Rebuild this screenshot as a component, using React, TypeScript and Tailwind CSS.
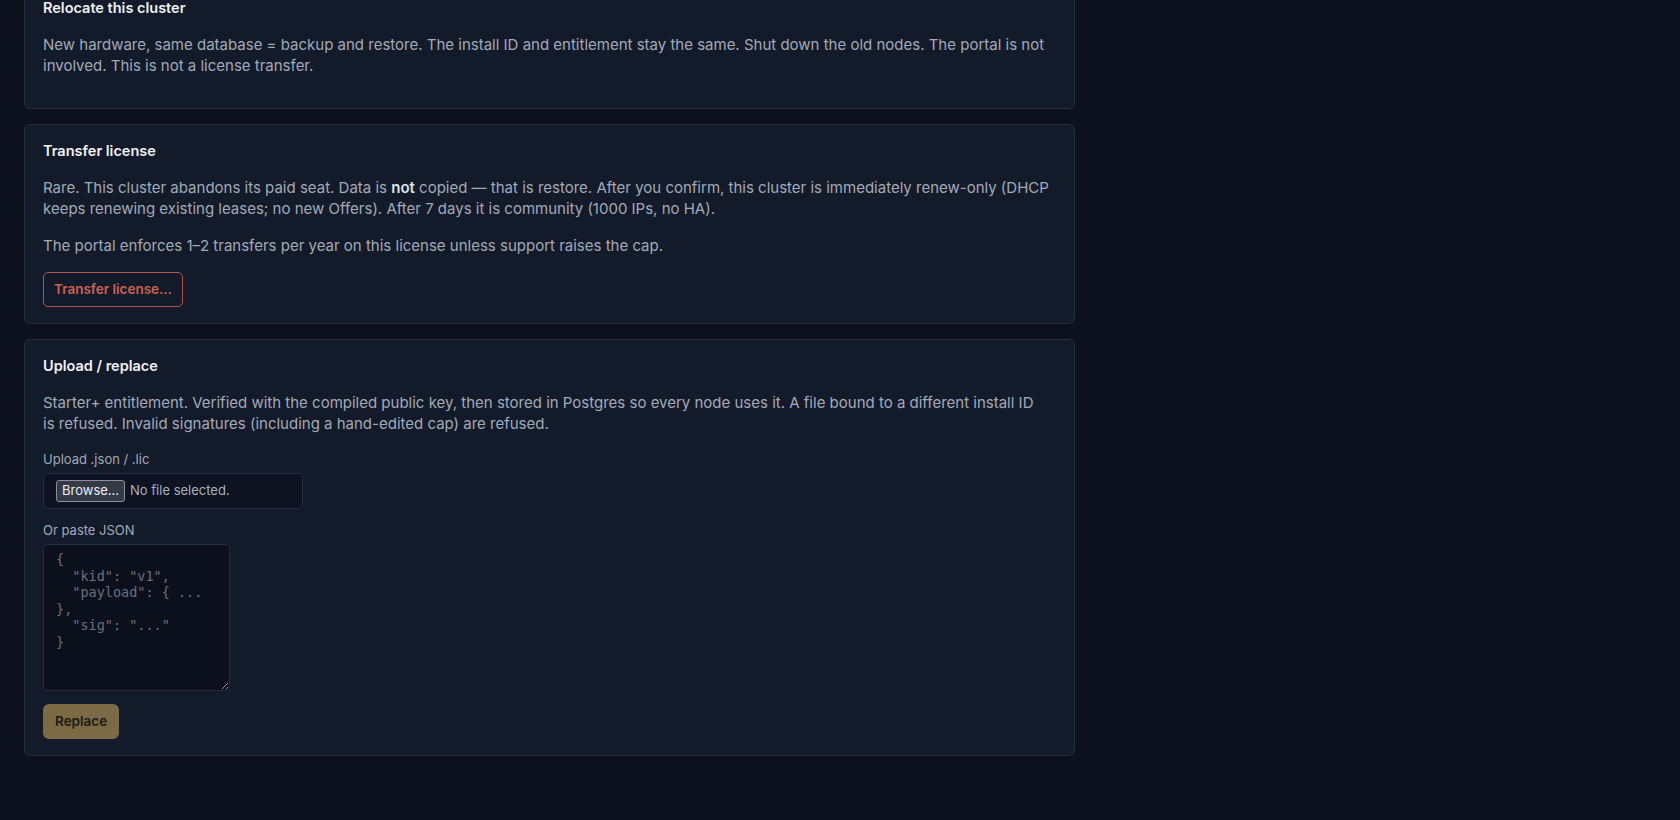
import React from "react";

const font = "font-['Inter','Noto_Sans',sans-serif]";

function Card({ title, children }: { title: string; children: React.ReactNode }) {
  return (
    <section className="w-[1051px] rounded-md border border-[#252e40] bg-[#131a2a] px-[18px] py-4">
      <h3 className="text-[14.5px] leading-5 font-semibold text-[#eef1f5] mb-4">{title}</h3>
      {children}
    </section>
  );
}

export default function App() {
  return (
    <div className={`min-h-screen bg-[#0c111d] ${font} overflow-hidden`}>
      <div className="-mt-[19px] pl-6 flex flex-col gap-[15px]">
        <Card title="Relocate this cluster">
          <p className="text-[15px] leading-[21px] text-[#a2aab8] mb-4">
            New hardware, same database = backup and restore. The install ID and entitlement stay the same. Shut
            down the old nodes. The portal is not involved. This is not a license transfer.
          </p>
        </Card>

        <Card title="Transfer license">
          <p className="text-[15px] leading-[21px] text-[#a2aab8] mb-4">
            Rare. This cluster abandons its paid seat. Data is <b className="font-semibold text-[#dfe3ea]">not</b> copied — that
            is restore. After you confirm, this cluster is immediately renew-only (DHCP keeps renewing existing leases;
            no new Offers). After 7 days it is community (1000 IPs, no HA).
          </p>
          <p className="text-[15px] leading-[21px] text-[#a2aab8] mb-4">
            The portal enforces 1–2 transfers per year on this license unless support raises the cap.
          </p>
          <button className="h-[35px] w-[140px] rounded-[5px] border border-[#b4534a] text-[13.5px] font-semibold text-[#cd634f]">
            Transfer license…
          </button>
        </Card>

        <Card title="Upload / replace">
          <p className="max-w-[1000px] text-[15px] leading-[21px] text-[#a2aab8] mb-4">
            Starter+ entitlement. Verified with the compiled public key, then stored in Postgres so every node uses
            it. A file bound to a different install ID is refused. Invalid signatures (including a hand-edited cap)
            are refused.
          </p>

          <label className="block text-[13px] leading-[19px] text-[#a2aab8] mb-1">Upload .json / .lic</label>
          <div className="h-9 w-[260px] flex items-center gap-[5px] rounded-[4px] border border-[#242d3e] bg-[#0d1321] pl-3">
            <span className="h-[22px] px-[5px] flex items-center rounded-[3px] border border-[#8b909a] bg-[#343a46] text-[13px] text-[#eceef2]">
              Browse…
            </span>
            <span className="text-[13px] text-[#a9b0bd]">No file selected.</span>
          </div>

          <label className="block mt-3 text-[13px] leading-[19px] text-[#a2aab8] mb-1">Or paste JSON</label>
          <textarea
            className="block h-[147px] w-[187px] rounded-[4px] border border-[#242d3e] bg-[#0b101c] px-3 pt-[6px] pb-1 font-['DejaVu_Sans_Mono',monospace] text-[13.5px] leading-[16.5px] text-[#c9ced8] placeholder:text-[#687080] outline-none"
            placeholder={'{\n  "kid": "v1",\n  "payload": { ...\n},\n  "sig": "..."\n}'}
          />

          <button className="mt-[13px] h-[35px] px-3 rounded-[6px] bg-[#7b6a43] text-[13.5px] font-semibold text-[#1b1a17]">
            Replace
          </button>
        </Card>
      </div>
    </div>
  );
}
